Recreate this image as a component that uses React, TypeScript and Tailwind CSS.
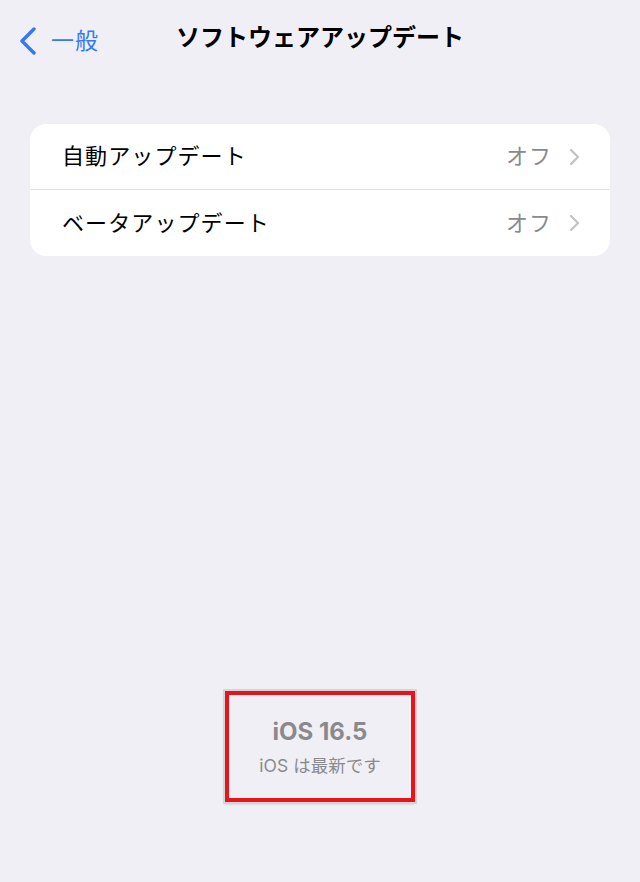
import React from 'react';

const font = { fontFamily: 'Inter, "Noto Sans CJK JP", sans-serif' };

const Chevron = () => (
  <svg width="12" height="18" viewBox="0 0 12 18" fill="none" stroke="#c4c4c7" strokeWidth={2.4} strokeLinecap="round" strokeLinejoin="round">
    <path d="M3 2l7 7-7 7" />
  </svg>
);

const Row = ({ label, value, last = false }: { label: string; value: string; last?: boolean }) => (
  <div className={`flex items-center justify-between h-[66px] pl-[32px] pr-[30px] ${last ? '' : 'border-b border-[#e3e3e7]'}`}>
    <span className="text-[22px] text-black tracking-[1.1px]">{label}</span>
    <span className="flex items-center gap-[16px]">
      <span className="text-[22px] tracking-[1px] text-[#8a8a8e]">{value}</span>
      <Chevron />
    </span>
  </div>
);

export default function App() {
  return (
    <div className="flex flex-col h-[882px] w-[640px] bg-[#f0eff5]" style={font}>
      <div className="relative flex items-center h-[76px]">
        <div className="absolute left-[19px] top-[24px] flex items-center gap-[14px] text-[#3478f6]">
          <svg width="18" height="28" viewBox="0 0 18 28" fill="none" stroke="#3478f6" strokeWidth={3.4} strokeLinecap="round" strokeLinejoin="round">
            <path d="M15 2L3 14l12 12" />
          </svg>
          <span className="text-[23px] tracking-[1px]">一般</span>
        </div>
        <div className="w-full text-center text-[24px] font-bold text-black">ソフトウェアアップデート</div>
      </div>
      <div className="mx-[30px] mt-[48px] rounded-[16px] bg-white">
        <Row label="自動アップデート" value="オフ" />
        <Row label="ベータアップデート" value="オフ" last />
      </div>
      <div className="flex-1" />
      <div className="mx-auto mb-[80px] w-[190px] h-[111px] border-[4px] border-[#e8141c] shadow-[0_0_0_2px_#d5d5d8,0_1px_3px_#9a9a9e] flex flex-col items-center justify-center pt-[4px]">
        <div className="text-[24px] font-bold text-[#8a8a8e] leading-[30px]">iOS 16.5</div>
        <div className="text-[17.5px] text-[#8a8a8e] mt-[6px]">iOS は最新です</div>
      </div>
    </div>
  );
}
